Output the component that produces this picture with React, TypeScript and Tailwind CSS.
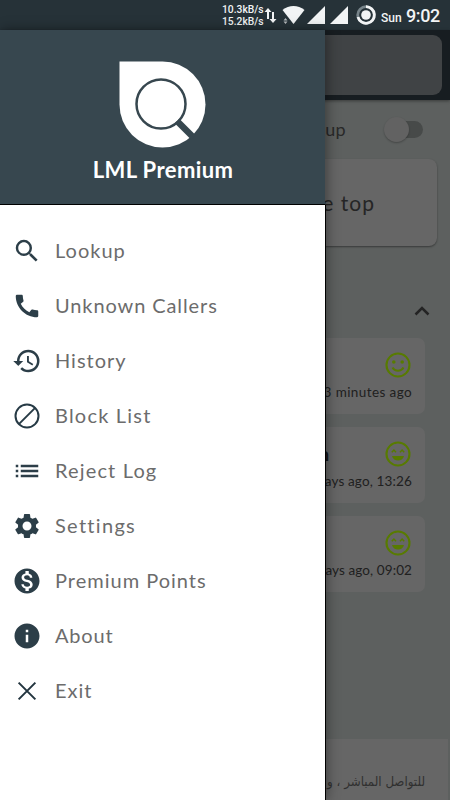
import React from "react";
import { MdSearch, MdCall, MdHistory, MdSettings, MdMonetizationOn, MdInfo, MdList } from "react-icons/md";

const BlockIcon = () => (
  <svg viewBox="0 0 24 24" className="size-[30px]" fill="none" stroke="#263a45" strokeWidth="1.6">
    <circle cx="12" cy="12" r="9.2" />
    <path d="M5.5 18.5 18.5 5.5" />
  </svg>
);

const CloseIcon = () => (
  <svg viewBox="0 0 24 24" className="size-[30px]" fill="none" stroke="#22343e" strokeWidth="1.6">
    <path d="M5.300 5.300 18.700 18.700M18.700 5.300 5.300 18.700" />
  </svg>
);

const items = [
  { label: "Lookup", icon: <MdSearch size={30} />, spacing: "tracking-[1px]" },
  { label: "Unknown Callers", icon: <MdCall size={30} />, spacing: "tracking-[0.9px]" },
  { label: "History", icon: <MdHistory size={30} />, spacing: "tracking-[1px]" },
  { label: "Block List", icon: <BlockIcon />, spacing: "tracking-[1.2px]" },
  { label: "Reject Log", icon: <MdList size={30} />, spacing: "tracking-[1.15px]" },
  { label: "Settings", icon: <MdSettings size={30} />, spacing: "tracking-[1.3px]" },
  { label: "Premium Points", icon: <MdMonetizationOn size={30} />, spacing: "tracking-[1px]" },
  { label: "About", icon: <MdInfo size={30} />, spacing: "tracking-[0.8px]" },
  { label: "Exit", icon: <CloseIcon />, spacing: "tracking-[1px]" },
];

const Smile = ({ grin }: { grin: boolean }) => (
  <svg viewBox="0 0 26 26" className="size-[26px]" fill="none" stroke="#587b00" strokeWidth="2.1">
    <circle cx="13" cy="13" r="11.5" />
    {grin ? (
      <>
        <path d="m6.800 11.300 2.100-2.300 2.100 2.300M15 11.300 17.100 9l2.100 2.300" strokeWidth="1.500" />
        <path d="M7 15h12c-.8 3-3.200 4.600-6 4.600S7.800 18 7 15Z" fill="#587b00" stroke="none" />
      </>
    ) : (
      <>
        <circle cx="8.800" cy="10" r="1.800" fill="#587b00" stroke="none" />
        <circle cx="17.200" cy="10" r="1.800" fill="#587b00" stroke="none" />
        <path d="M7.500 15.500c1.200 2.200 3.200 3.300 5.500 3.300s4.300-1.100 5.500-3.300" strokeWidth="1.900" />
      </>
    )}
  </svg>
);

const calls = [
  { time: "3 minutes ago", grin: false, spacing: "tracking-[0.4px]" },
  { time: "days ago, 13:26", grin: true, spacing: "tracking-[0.15px]" },
  { time: "days ago, 09:02", grin: true, spacing: "tracking-[0.1px]" },
];

function StatusBar() {
  return (
    <div className="flex h-[30px] items-center justify-end bg-[#263238] pr-[11px] font-[Roboto,sans-serif] text-[#f2f4f5]">
      <div className="flex h-6 w-[41px] flex-col justify-center whitespace-nowrap pt-px text-[10.3px] font-medium leading-[12px]">
        <span>10.3kB/s</span>
        <span>15.2kB/s</span>
      </div>
      <svg width="143" height="30" viewBox="264 0 143 30" className="shrink-0" fill="currentColor">
        <path d="m269 8 3.500 4h-2.500v7h-2v-7h-2.500zM274 23l-3.500-4h2.500v-7h2v7h2.500z" />
        <path d="M294.500 24 283.500 10c6.500-5.300 15.500-5.300 22 0Z" />
        <path d="m286.500 18 2 2.500h-4zM286.500 24l-2-2.500h4z" opacity=".7" />
        <path d="M326 6v18h-18zM349 6v18h-18z" />
        <circle cx="367" cy="15" r="8.300" fill="none" stroke="#77848a" strokeWidth="2.800" />
        <path d="M367 6.700A8.300 8.300 0 1 1 359 17" fill="none" stroke="currentColor" strokeWidth="2.800" />
        <circle cx="367" cy="15" r="4.800" />
        <text x="382" y="21.500" fontSize="12" fontWeight="500">Sun</text>
      </svg>
      <span className="w-[33px] whitespace-nowrap pt-[2px] text-[18px] font-medium leading-[30px] tracking-[-0.4px]">9:02</span>
    </div>
  );
}

export default function App() {
  return (
    <div className="relative h-[800px] w-[450px] overflow-hidden bg-[#5d605f] font-[Lato,'Noto_Sans',sans-serif]">
      <StatusBar />
      <main className="flex h-[770px] flex-col">
        <div className="h-[70px] shrink-0 bg-[#171d21] pr-2 pt-[5px] shadow-[0_1px_3px_#0006]">
          <div className="h-[60px] rounded-[9px] bg-[#404345]" />
        </div>
        <div className="flex h-[59px] shrink-0 items-center justify-end pr-[27px]">
          <span className="mr-[38px] text-[18px] tracking-[0.3px] text-[#292929]">Lookup</span>
          <div className="h-[17px] w-[39px] rounded-full bg-[linear-gradient(90deg,transparent_30%,#474a49_30%)]">
            <div className="-mt-1 size-[25px] rounded-full bg-[#626262] shadow-[0_1px_2px_#0004]" />
          </div>
        </div>
        <div className="mr-[13px] flex h-[87px] shrink-0 items-center justify-end rounded-[8px] bg-[#666] pr-[62px] shadow-[0_1px_2px_#0006]">
          <span className="text-[21px] tracking-[1px] text-[#252525]">Swipe to the top</span>
        </div>
        <div className="flex h-[92px] shrink-0 items-center justify-end pr-[20px] pt-[37px]">
          <svg width="16" height="12" viewBox="0 0 16 12" fill="none" stroke="#242424" strokeWidth="2.500">
            <path d="m1.500 9.500 6.500-6.500 6.500 6.500" />
          </svg>
        </div>
        <div className="mr-[25px] flex flex-col gap-[13px]">
          {calls.map((call, i) => (
            <div key={i} className="flex h-[76px] flex-col items-end rounded-[7px] bg-[#666] pr-[13px] pt-[14px]">
              <div className="flex w-full items-center justify-end gap-[55px] pr-[1.5px]">
                {i === 1 && <span className="text-[17px] font-bold leading-none text-[#161616]">ם</span>}
                <Smile grin={call.grin} />
              </div>
              <span className={"mt-[4px] whitespace-nowrap text-[13.500px] leading-[20px] text-[#202020] " + call.spacing}>{call.time}</span>
            </div>
          ))}
        </div>
        <footer dir="rtl" className="mr-[2px] mt-auto h-[61px] shrink-0 whitespace-nowrap bg-[#666] pr-[23px] pt-[32px] text-[13.2px] leading-[22px] text-[#303030] font-['DejaVu_Sans_Condensed','DejaVu_Sans',sans-serif] [font-stretch:condensed]">
          للتواصل المباشر ، و
        </footer>
      </main>

      <aside className="absolute left-0 top-[30px] flex h-[770px] w-[325px] flex-col shadow-[2px_0_12px_#0006]">
        <header className="flex h-[175px] shrink-0 flex-col items-center border-b border-black bg-[#37474f] pr-[2px] pt-[31px]">
          <svg width="88" height="88" viewBox="0 0 88 88">
            <path d="M1.500 0.500h43a43 43 0 1 1-43 43Z" fill="#fff" />
            <circle cx="43" cy="43" r="24.500" fill="none" stroke="#37474f" strokeWidth="2.500" />
            <path d="m59 60 16.500 16.500" stroke="#37474f" strokeWidth="6.500" />
          </svg>
          <h1 className="mt-[5px] whitespace-nowrap pl-[3px] text-[22px] font-bold leading-[32px] tracking-[0.4px] text-white">LML Premium</h1>
        </header>
        <nav className="w-[326px] grow border-r border-black bg-white pt-[18px]">
          {items.map((item) => (
            <div key={item.label} className="flex h-[55px] items-center pl-[12px] text-[#2c3e48]">
              <span className="flex w-[43px] shrink-0">{item.icon}</span>
              <span className={"-mt-[2px] whitespace-nowrap text-[20px] leading-[28px] text-[#6c6c6c] " + item.spacing}>{item.label}</span>
            </div>
          ))}
        </nav>
      </aside>
    </div>
  );
}
